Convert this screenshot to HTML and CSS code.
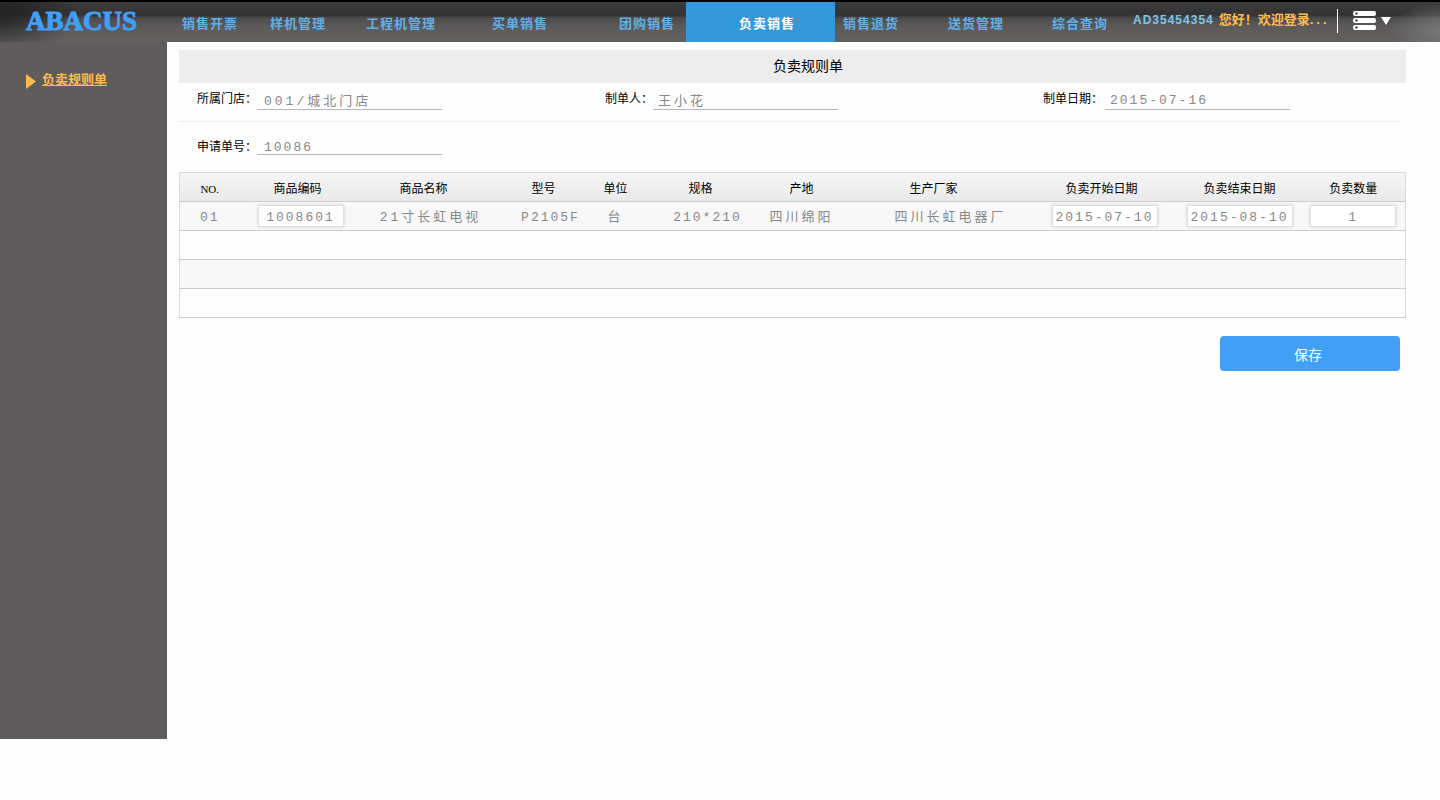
FILE: index.html
```html
<!DOCTYPE html>
<html lang="zh-CN">
<head>
<meta charset="utf-8">
<title>负卖规则单</title>
<link rel="stylesheet" href="styles.css">
</head>
<body>
<header class="topbar">
  <div class="logo">ABACUS</div>
  <nav class="nav">
    <a href="#">销售开票</a>
    <a href="#">样机管理</a>
    <a href="#">工程机管理</a>
    <a href="#">买单销售</a>
    <a href="#">团购销售</a>
    <a href="#" class="active" aria-current="page">负卖销售</a>
    <a href="#" class="after-active">销售退货</a>
    <a href="#">送货管理</a>
    <a href="#">综合查询</a>
  </nav>
  <div class="user">
    <span class="user-id">AD35454354</span>
    <span class="greeting">您好！欢迎登录<span class="dots">...</span></span>
    <button class="menu" type="button" aria-label="菜单">
      <svg width="38" height="20" viewBox="0 0 38 20">
        <g fill="#fff">
          <rect x="0" y="0" width="23" height="5" rx="2"/>
          <rect x="0" y="7" width="23" height="5" rx="2"/>
          <rect x="0" y="14" width="23" height="5" rx="2"/>
          <path d="M28 6h10l-5 8z"/>
        </g>
        <g fill="#555">
          <circle cx="3.5" cy="2.5" r="1.3"/>
          <circle cx="3.5" cy="9.5" r="1.3"/>
          <circle cx="3.5" cy="16.5" r="1.3"/>
        </g>
      </svg>
    </button>
  </div>
</header>
<div class="page">
  <aside class="sidebar">
    <a class="side-link" href="#">
      <svg width="10" height="15" viewBox="0 0 10 15"><path d="M0 0l10 7.500L0 15z" fill="#fdb94d"/></svg>
      <span>负卖规则单</span>
    </a>
  </aside>
  <main class="main">
    <h1 class="title">负卖规则单</h1>
    <form class="form">
      <div class="fields fields-first">
        <div class="field"><label for="store">所属门店：</label><input id="store" class="wide-text" value="001/城北门店"></div>
        <div class="field field-near"><label for="maker">制单人：</label><input id="maker" class="wide-text" value="王小花"></div>
        <div class="field field-near field-date"><label for="date">制单日期：</label><input id="date" value="2015-07-16"></div>
      </div>
      <div class="fields fields-second">
        <div class="field"><label for="order">申请单号：</label><input id="order" value="10086"></div>
      </div>
      <table class="grid">
        <colgroup>
          <col class="c-no"><col class="c-code"><col class="c-name"><col class="c-model"><col class="c-unit"><col class="c-spec"><col class="c-origin"><col class="c-maker"><col class="c-start"><col class="c-end"><col class="c-qty">
        </colgroup>
        <thead>
          <tr><th class="no">NO.</th><th>商品编码</th><th>商品名称</th><th>型号</th><th>单位</th><th>规格</th><th>产地</th><th>生产厂家</th><th>负卖开始日期</th><th>负卖结束日期</th><th class="qty">负卖数量</th></tr>
        </thead>
        <tbody>
          <tr>
            <td>01</td>
            <td class="shift-s"><input class="box" aria-label="商品编码" value="1008601"></td>
            <td class="shift-m wide-text">21寸长虹电视</td>
            <td class="shift-m">P2105F</td>
            <td class="wide-text">台</td>
            <td class="shift-m">210*210</td>
            <td class="wide-text">四川绵阳</td>
            <td class="shift-l wide-text">四川长虹电器厂</td>
            <td class="shift-s"><input class="box box-date" aria-label="负卖开始日期" value="2015-07-10"></td>
            <td><input class="box box-date" aria-label="负卖结束日期" value="2015-08-10"></td>
            <td class="qty"><input class="box" aria-label="负卖数量" value="1"></td>
          </tr>
          <tr><td colspan="11"></td></tr>
          <tr><td colspan="11"></td></tr>
          <tr><td colspan="11"></td></tr>
        </tbody>
      </table>
      <div class="actions"><button class="save" type="submit">保存</button></div>
    </form>
  </main>
</div>
</body>
</html>
```
FILE: styles.css
```css
* { box-sizing: border-box; }

body {
  margin: 0;
  background: #fefefe;
  color: #000;
  font: 12px/16px "Liberation Sans", "Noto Sans CJK SC", sans-serif;
}

input, button { font: inherit; color: inherit; }

.topbar {
  display: flex;
  height: 42px;
  border-top: 2px solid #000;
  background:
    radial-gradient(ellipse 80px 40px at 0 10px, #222 0, #2228 50%, #2220 100%),
    radial-gradient(ellipse 50px 30px at 100% 75%, #777 0, #7770 100%),
    linear-gradient(#3c3c3c 0, #333 13px, #4c4a4a 16px, #5d5a5a 25px, #625f5f 40px);
}

.logo {
  flex: 0 0 182px;
  padding-left: 26px;
  color: #429ff5;
  font: bold 27px/38px "Liberation Serif", serif;
  -webkit-text-stroke: 1px #429ff5;
}

.nav {
  flex: 1;
  display: grid;
  grid-template-columns: 88fr 96fr 126fr 127fr 67fr 149fr 113fr 104fr 81fr;
}

.nav a {
  padding-top: 4px;
  color: #62aee6;
  font-size: 13px;
  font-weight: bold;
  line-height: 36px;
  letter-spacing: 1px;
  text-decoration: none;
  white-space: nowrap;
}

.nav .active {
  background: #3598db;
  color: #fff;
  padding-left: 53px;
}

.nav .after-active { padding-left: 8px; }

.user {
  flex: 0 0 307px;
  display: flex;
  align-items: flex-start;
  gap: 5px;
  padding-top: 7px;
  font-weight: bold;
  white-space: nowrap;
}

.user-id {
  color: #7cc6ec;
  line-height: 22px;
  letter-spacing: 1px;
}

.greeting {
  color: #fdbb4f;
  font-size: 13px;
  line-height: 22px;
}

.dots { letter-spacing: 3px; }

.menu {
  display: flex;
  height: 24px;
  margin-left: 2px;
  padding: 2px 0 0 15px;
  border: 0;
  border-left: 1px solid #fff;
  background: none;
}

.page { display: flex; align-items: flex-start; }

.sidebar {
  flex: 0 0 167px;
  min-height: calc(100vh - 103px);
  padding: 28px 0 0 26px;
  background: #5f5c5d;
}

.side-link {
  display: flex;
  align-items: center;
  gap: 6px;
  color: #fdbb4f;
  font-size: 13px;
  line-height: 18px;
  font-weight: bold;
}

.side-link svg { margin-top: 4px; }

.main {
  flex: 1;
  min-width: 0;
  padding: 8px 34px 0 12px;
}

.title {
  margin: 0;
  padding-left: 31px;
  background: #ededed;
  font-size: 14px;
  font-weight: normal;
  line-height: 33px;
  text-align: center;
}

.form { margin-right: 1px; }

.fields {
  display: grid;
  grid-template-columns: 408fr 438fr 357fr;
  padding-left: 18px;
}

.fields-first {
  height: 39px;
  padding-top: 6px;
  margin-right: 5px;
  border-bottom: 1px dotted #ddd;
}

.fields-second {
  height: 50px;
  padding-top: 15px;
}

.field { display: flex; align-items: flex-start; }

.field-date { gap: 2px; }

.field label { line-height: 20px; }

.field input {
  width: 185px;
  height: 21px;
  padding: 3px 0 0 7px;
  border: 0;
  border-bottom: 1px solid #b5b8b8;
  background: none;
}

.field .wide-text { padding-top: 0; }
.fields-second input { height: 18px; }

.field-near input { padding-left: 5px; }

.field input, .grid td, .box {
  color: #888;
  font-family: "Liberation Mono", "Noto Sans CJK SC", monospace;
  font-size: 13px;
  letter-spacing: 2px;
}

.field .wide-text, .grid .wide-text { letter-spacing: 3px; }

.grid {
  width: 100%;
  table-layout: fixed;
  border-collapse: collapse;
  border: 1px solid #d9d9d9;
}

.c-no { width: 60px; }
.c-code { width: 116px; }
.c-name { width: 136px; }
.c-model { width: 104px; }
.c-unit { width: 40px; }
.c-spec { width: 130px; }
.c-origin { width: 72px; }
.c-maker { width: 192px; }
.c-start { width: 144px; }
.c-end { width: 132px; }
.c-qty { width: 100px; }

.grid tr { height: 29px; border-bottom: 1px solid #ccc; }
.grid thead { background: linear-gradient(#f5f5f5, #e9e9e9); }
.grid tbody tr:nth-child(odd) { background: #f8f8f8; }

.grid th, .grid td {
  padding: 3px 0 0;
  line-height: 20px;
  text-align: center;
  white-space: nowrap;
}

.grid th { font-weight: normal; }
.grid th.no { font-family: "Liberation Serif", serif; font-size: 11px; }
.grid .shift-s { padding-left: 6px; }
.grid .shift-m { padding-left: 14px; }
.grid .shift-l { padding-left: 34px; }
.grid .qty { padding-right: 4px; }
.grid td:has(.box) { padding-top: 0; }

.box {
  display: block;
  width: 86px;
  height: 22px;
  margin: 0 auto;
  padding: 2px 0 0;
  border: 1px solid #e0e0e0;
  border-radius: 2px;
  background: #fff;
  box-shadow: 0 0 3px #ccc;
  text-align: center;
}

.box-date { width: 106px; }

.actions {
  display: flex;
  justify-content: flex-end;
  padding: 18px 5px 0 0;
}

.save {
  width: 180px;
  height: 35px;
  padding: 2px 4px 0 0;
  border: 0;
  border-radius: 4px;
  background: #429ff5;
  color: #fff;
  font-size: 14px;
}
```
